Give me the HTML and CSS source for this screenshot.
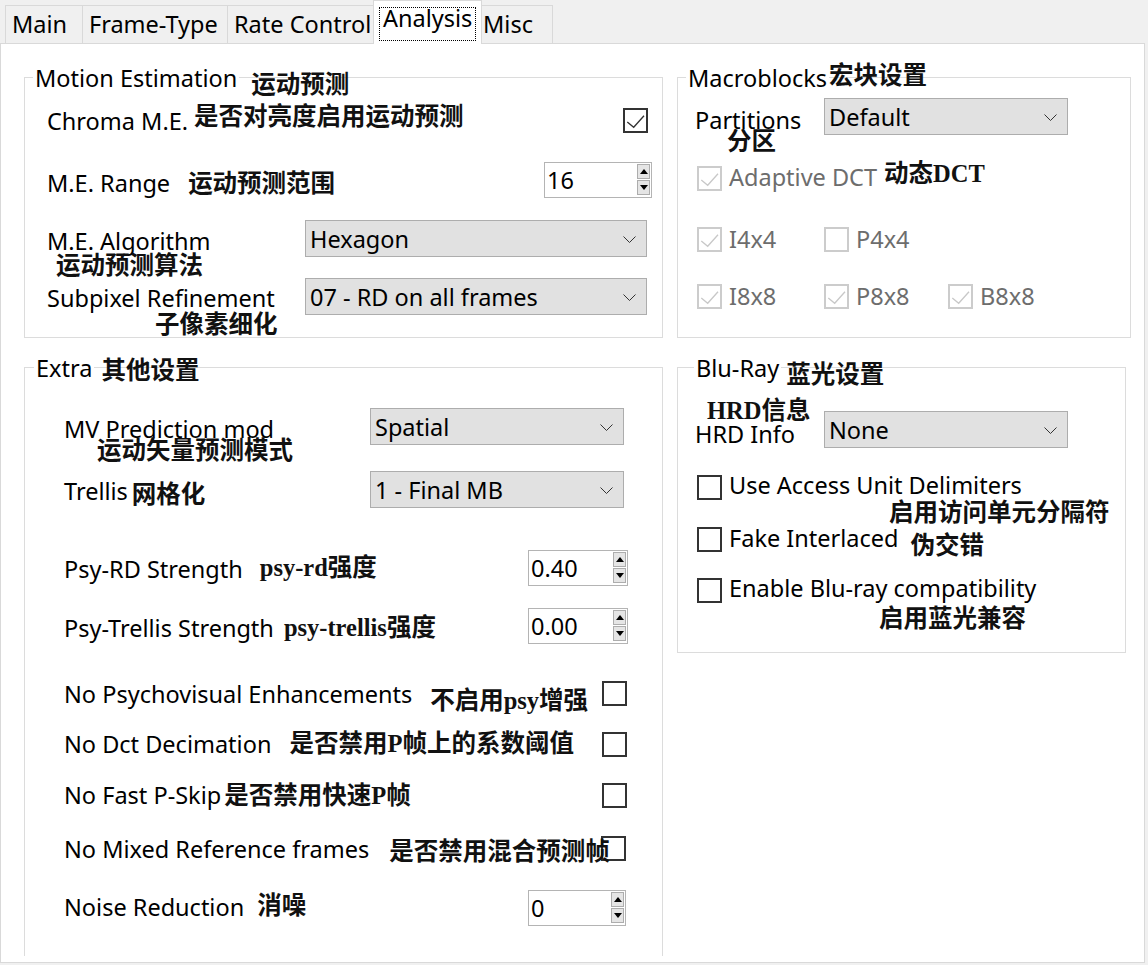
FILE: index.html
```html
<!DOCTYPE html>
<html>
<head>
<meta charset="utf-8">
<title>Analysis</title>
<link rel="stylesheet" href="styles.css">
</head>
<body>
<div class="tabbar">
  <div class="tab t-main">Main</div>
  <div class="tab t-frame">Frame-Type</div>
  <div class="tab t-rate">Rate Control</div>
  <div class="tab tab-active"><span class="focus">Analysis</span></div>
  <div class="tab t-misc">Misc</div>
</div>
<div class="page">
  <div class="content">

    <section class="group g-me">
      <div class="ghead">
        <span class="legend">Motion Estimation</span>
        <span class="ann a-me">运动预测</span>
      </div>
      <div class="row r-chroma">
        <span class="lbl">Chroma M.E.</span>
        <span class="ann a-chroma">是否对亮度启用运动预测</span>
        <span class="cb cb-right"><svg width="21" height="21" viewBox="0 0 21 21"><polyline points="2.3,12 8.7,17.3 19,5.7"/></svg></span>
      </div>
      <div class="row r-range">
        <span class="lbl l-range">M.E. Range</span>
        <span class="ann a-range">运动预测范围</span>
        <div class="spin w-range"><span>16</span><div class="arrows"><span class="sb"><svg width="8" height="5" viewBox="0 0 8 5"><polygon points="0,5 4,0 8,5"/></svg></span><span class="sb"><svg width="8" height="5" viewBox="0 0 8 5"><polygon points="0,0 8,0 4,5"/></svg></span></div></div>
      </div>
      <div class="row r-alg">
        <div class="stack s-alg"><span class="lbl">M.E. Algorithm</span><span class="ann a-alg">运动预测算法</span></div>
        <div class="combo w-me"><span>Hexagon</span><svg class="chev" width="13" height="8" viewBox="0 0 13 8"><polyline points="0.5,0.5 6.5,6.5 12.5,0.5"/></svg></div>
      </div>
      <div class="row r-sub">
        <div class="stack s-sub"><span class="lbl">Subpixel Refinement</span><span class="ann a-sub">子像素细化</span></div>
        <div class="combo w-me"><span>07 - RD on all frames</span><svg class="chev" width="13" height="8" viewBox="0 0 13 8"><polyline points="0.5,0.5 6.5,6.5 12.5,0.5"/></svg></div>
      </div>
    </section>

    <section class="group g-mb">
      <div class="ghead">
        <span class="legend">Macroblocks</span>
        <span class="ann a-mb">宏块设置</span>
      </div>
      <div class="row r-part">
        <div class="stack s-part"><span class="lbl">Partitions</span><span class="ann a-part">分区</span></div>
        <div class="combo w-part"><span>Default</span><svg class="chev" width="13" height="8" viewBox="0 0 13 8"><polyline points="0.5,0.5 6.5,6.5 12.5,0.5"/></svg></div>
      </div>
      <div class="row cbrow r-adct">
        <span class="cb dis"><svg width="21" height="21" viewBox="0 0 21 21"><polyline points="2.3,12 8.7,17.3 19,5.7"/></svg></span>
        <span class="lt dis-t l-adct">Adaptive DCT</span>
        <span class="ann a-adct">动态DCT</span>
      </div>
      <div class="row cbrow r-i4">
        <div class="cbi"><span class="cb dis"><svg width="21" height="21" viewBox="0 0 21 21"><polyline points="2.3,12 8.7,17.3 19,5.7"/></svg></span><span class="lt dis-t">I4x4</span></div>
        <div class="cbi cbi2"><span class="cb dis"></span><span class="lt dis-t">P4x4</span></div>
      </div>
      <div class="row cbrow r-i8">
        <div class="cbi"><span class="cb dis"><svg width="21" height="21" viewBox="0 0 21 21"><polyline points="2.3,12 8.7,17.3 19,5.7"/></svg></span><span class="lt dis-t">I8x8</span></div>
        <div class="cbi cbi2"><span class="cb dis"><svg width="21" height="21" viewBox="0 0 21 21"><polyline points="2.3,12 8.7,17.3 19,5.7"/></svg></span><span class="lt dis-t">P8x8</span></div>
        <div class="cbi cbi3"><span class="cb dis"><svg width="21" height="21" viewBox="0 0 21 21"><polyline points="2.3,12 8.7,17.3 19,5.7"/></svg></span><span class="lt dis-t">B8x8</span></div>
      </div>
    </section>

    <section class="group g-ex">
      <div class="ghead">
        <span class="legend">Extra</span>
        <span class="ann a-ex">其他设置</span>
      </div>
      <div class="row r-mv">
        <div class="stack s-mv"><span class="lbl">MV Prediction mod</span><span class="ann a-mv">运动矢量预测模式</span></div>
        <div class="combo w-ex"><span>Spatial</span><svg class="chev" width="13" height="8" viewBox="0 0 13 8"><polyline points="0.5,0.5 6.5,6.5 12.5,0.5"/></svg></div>
      </div>
      <div class="row r-trel">
        <span class="lbl l-trel">Trellis</span>
        <span class="ann a-trel">网格化</span>
        <div class="combo w-ex"><span>1 - Final MB</span><svg class="chev" width="13" height="8" viewBox="0 0 13 8"><polyline points="0.5,0.5 6.5,6.5 12.5,0.5"/></svg></div>
      </div>
      <div class="row r-prd">
        <span class="lbl l-prd">Psy-RD Strength</span>
        <span class="ann a-prd">psy-rd强度</span>
        <div class="spin w-ps"><span>0.40</span><div class="arrows"><span class="sb"><svg width="8" height="5" viewBox="0 0 8 5"><polygon points="0,5 4,0 8,5"/></svg></span><span class="sb"><svg width="8" height="5" viewBox="0 0 8 5"><polygon points="0,0 8,0 4,5"/></svg></span></div></div>
      </div>
      <div class="row r-ptr">
        <span class="lbl l-ptr">Psy-Trellis Strength</span>
        <span class="ann a-ptr">psy-trellis强度</span>
        <div class="spin w-ps"><span>0.00</span><div class="arrows"><span class="sb"><svg width="8" height="5" viewBox="0 0 8 5"><polygon points="0,5 4,0 8,5"/></svg></span><span class="sb"><svg width="8" height="5" viewBox="0 0 8 5"><polygon points="0,0 8,0 4,5"/></svg></span></div></div>
      </div>
      <div class="row r-npsy">
        <span class="lbl">No Psychovisual Enhancements</span>
        <span class="ann a-npsy">不启用psy增强</span>
        <span class="cb ex-cb"></span>
      </div>
      <div class="row r-ndct">
        <span class="lbl l-b2">No Dct Decimation</span>
        <span class="ann a-ndct">是否禁用P帧上的系数阈值</span>
        <span class="cb ex-cb"></span>
      </div>
      <div class="row r-nfast">
        <span class="lbl l-b2">No Fast P-Skip</span>
        <span class="ann a-nfast">是否禁用快速P帧</span>
        <span class="cb ex-cb"></span>
      </div>
      <div class="row r-nmix">
        <span class="lbl">No Mixed Reference frames</span>
        <span class="ann a-nmix">是否禁用混合预测帧</span>
        <span class="cb ex-cb cb-mix"></span>
      </div>
      <div class="row r-noise">
        <span class="lbl l-b2">Noise Reduction</span>
        <span class="ann a-noise">消噪</span>
        <div class="spin w-noise"><span>0</span><div class="arrows"><span class="sb"><svg width="8" height="5" viewBox="0 0 8 5"><polygon points="0,5 4,0 8,5"/></svg></span><span class="sb"><svg width="8" height="5" viewBox="0 0 8 5"><polygon points="0,0 8,0 4,5"/></svg></span></div></div>
      </div>
    </section>

    <section class="group g-bd">
      <div class="ghead">
        <span class="legend">Blu-Ray</span>
        <span class="ann a-bd">蓝光设置</span>
      </div>
      <div class="row r-hrd">
        <div class="stack s-hrd"><span class="ann a-hrd">HRD信息</span><span class="lbl l-hrd">HRD Info</span></div>
        <div class="combo w-hrd"><span>None</span><svg class="chev" width="13" height="8" viewBox="0 0 13 8"><polyline points="0.5,0.5 6.5,6.5 12.5,0.5"/></svg></div>
      </div>
      <div class="row cbrow r-aud">
        <span class="cb"></span>
        <div class="stack s-aud"><span class="lbl">Use Access Unit Delimiters</span><span class="ann a-aud">启用访问单元分隔符</span></div>
      </div>
      <div class="row cbrow r-fake">
        <span class="cb"></span>
        <span class="lt l-fake">Fake Interlaced</span>
        <span class="ann a-fake">伪交错</span>
      </div>
      <div class="row cbrow r-blu">
        <span class="cb"></span>
        <div class="stack s-blu"><span class="lbl">Enable Blu-ray compatibility</span><span class="ann a-blu">启用蓝光兼容</span></div>
      </div>
    </section>

  </div>
</div>
</body>
</html>
```

FILE: styles.css
```css
* { box-sizing: border-box; }
html, body { margin: 0; }
body {
  width: 1148px;
  height: 965px;
  overflow: hidden;
  background: #f0f0f0;
  color: #000;
  font-family: "Noto Sans", "Open Sans", sans-serif;
  font-size: 23.5px;
  line-height: 24px;
}

/* ---------- tabs ---------- */
.tabbar {
  height: 43px;
  display: flex;
  align-items: flex-end;
  padding-left: 5px;
}
.tab {
  flex: none;
  height: 38px;
  border: 1px solid #d9d9d9;
  border-bottom: 0;
  border-right: 0;
  background: #f0f0f0;
  padding-left: 6px;
  line-height: 37px;
  white-space: nowrap;
}
.t-main { width: 77px; }
.t-frame { width: 145px; }
.t-rate { width: 146px; }
.tab-active {
  width: 109px;
  height: 44px;
  margin-bottom: -1px;
  border-right: 1px solid #d9d9d9;
  background: #fff;
  position: relative;
  z-index: 1;
  padding: 6px 0 0 5px;
  display: flex;
  align-items: flex-start;
}
.focus {
  border: 1px dotted #000;
  padding: 0 3px 12px 3px;
  line-height: 20px;
}
.t-misc {
  width: 71px;
  border-left: 0;
  border-right: 1px solid #d9d9d9;
  padding-left: 1px;
}

/* ---------- page ---------- */
.page {
  width: 1145px;
  height: 920px;
  border: 1px solid #d9d9d9;
  background: #fff;
}
.content {
  height: 912px;
  overflow: hidden;
  padding: 33px 0 0 23px;
  display: grid;
  grid-template-columns: 639px 454px;
  grid-template-rows: 261px 640px;
  column-gap: 14px;
  row-gap: 29px;
  align-items: start;
  justify-items: start;
}

/* ---------- group boxes ---------- */
.group {
  border: 1px solid #dcdcdc;
  display: flex;
  flex-direction: column;
}
.g-me { width: 639px; height: 261px; }
.g-mb { width: 454px; height: 261px; }
.g-ex { width: 639px; height: 640px; }
.g-bd { width: 449px; height: 286px; }

.ghead {
  flex: none;
  display: flex;
  align-items: center;
  height: 26px;
  margin-top: -13px;
}
.legend {
  background: #fff;
  padding: 0 2px;
  white-space: nowrap;
}
.row {
  flex: none;
  display: flex;
  align-items: center;
}
.row > *, .ghead > * { flex: none; }
.lbl, .lt { white-space: nowrap; }

.ann {
  font-family: "Liberation Serif", "Noto Sans CJK SC", serif;
  font-weight: 700;
  font-size: 24.5px;
  line-height: 26px;
  white-space: nowrap;
  color: #111;
  position: relative;
  z-index: 1;
}
.row > .ann { margin-right: -80px; }

.stack {
  display: flex;
  flex-direction: column;
  align-items: flex-start;
  align-self: flex-start;
}

/* ---------- controls ---------- */
.combo {
  height: 37px;
  border: 1px solid #adadad;
  background: #e1e1e1;
  display: flex;
  align-items: center;
  padding-left: 4px;
  margin-left: auto;
  white-space: nowrap;
}
.chev {
  flex: none;
  margin-left: auto;
  margin-right: 10px;
  margin-top: 3px;
}
.chev polyline { fill: none; stroke: #333; stroke-width: 1; }

.spin {
  height: 36px;
  border: 1px solid #b4b4b4;
  background: #fff;
  display: flex;
  align-items: center;
  padding-left: 2px;
  margin-left: auto;
}
.arrows {
  margin-left: auto;
  margin-right: 1px;
  align-self: stretch;
  display: flex;
  flex-direction: column;
  gap: 1px;
  padding: 1px 0 2px;
}
.sb {
  flex: 1;
  width: 13px;
  background: #e5e5e5;
  border: 1px solid #adadad;
  display: flex;
  align-items: center;
  justify-content: center;
}
.sb polygon { fill: #000; }

.cb {
  width: 25px;
  height: 25px;
  border: 2px solid #333;
  background: #fff;
  display: flex;
  align-items: center;
  justify-content: center;
}
.cb svg polyline { fill: none; stroke: #333; stroke-width: 1.3; }
.cb.dis { border-color: #cccccc; }
.cb.dis svg polyline { stroke: #c8c8c8; }
.dis-t { color: #6d6d6d; }
.lt { margin-left: 7px; margin-bottom: 2px; }
.cbrow { height: 25px; padding-left: 19px; }
.cbi { display: flex; align-items: center; width: 127px; }
.cbi2 { width: 124px; }
.cbi3 { width: auto; }

/* ---------- Motion Estimation ---------- */
.g-me .legend { margin-left: 8px; }
.a-me { margin-left: 12px; margin-top: 13px; }
.g-me .row { padding-left: 22px; }
.r-chroma { height: 37px; margin-top: 11px; }
.a-chroma { margin-left: 6px; margin-bottom: 7px; }
.cb-right { margin-left: auto; margin-right: 14px; }
.r-range { height: 37px; margin-top: 22px; }
.l-range { margin-top: 6px; }
.a-range { margin-left: 18px; margin-top: 8px; }
.w-range { width: 108px; margin-right: 10px; }
.r-alg { height: 37px; margin-top: 22px; }
.s-alg { padding-top: 9px; }
.a-alg { margin-left: 9px; }
.w-me { width: 342px; margin-right: 15px; }
.r-sub { height: 37px; margin-top: 21px; }
.s-sub { padding-top: 8px; }
.a-sub { margin-left: 108px; margin-top: 2px; }

/* ---------- Macroblocks ---------- */
.g-mb .legend { margin-left: 8px; }
.a-mb { margin-left: 0; margin-bottom: 4px; }
.r-part { height: 37px; margin-top: 7px; padding-left: 17px; }
.s-part { padding-top: 10px; }
.a-part { margin-left: 32px; margin-top: -3px; }
.w-part { width: 244px; margin-right: 62px; }
.r-adct { margin-top: 31px; }
.l-adct { margin-bottom: 4px; }
.a-adct { margin-left: 7px; margin-bottom: 10px; }
.r-i4 { margin-top: 36px; }
.r-i8 { margin-top: 32px; }

/* ---------- Extra ---------- */
.g-ex .legend { margin-left: 9px; }
.a-ex { margin-left: 7px; margin-top: 5px; }
.g-ex .row { padding-left: 39px; }
.r-mv { height: 37px; margin-top: 27px; }
.s-mv { padding-top: 9px; }
.a-mv { margin-left: 33px; margin-top: -3px; }
.w-ex { width: 254px; margin-right: 38px; }
.r-trel { height: 37px; margin-top: 26px; }
.l-trel { margin-top: 3px; }
.a-trel { margin-left: 4px; margin-top: 11px; }
.r-prd { height: 36px; margin-top: 42px; }
.l-prd { margin-top: 2px; }
.a-prd { margin-left: 17px; }
.w-ps { width: 100px; margin-right: 34px; }
.r-ptr { height: 36px; margin-top: 22px; }
.l-ptr { margin-top: 3px; }
.a-ptr { margin-left: 10px; margin-top: 3px; }
.r-npsy { height: 25px; margin-top: 37px; }
.a-npsy { margin-left: 18px; margin-top: 15px; }
.ex-cb { margin-left: auto; margin-right: 35px; }
.r-ndct { height: 25px; margin-top: 26px; }
.l-b2 { margin-bottom: 2px; }
.a-ndct { margin-left: 18px; margin-bottom: 2px; }
.r-nfast { height: 25px; margin-top: 26px; }
.a-nfast { margin-left: 3px; }
.r-nmix { height: 25px; margin-top: 28px; }
.a-nmix { margin-left: 20px; margin-top: 7px; }
.cb-mix { margin-right: 36px; }
.r-noise { height: 36px; margin-top: 29px; }
.a-noise { margin-left: 13px; margin-bottom: 4px; }
.w-noise { width: 98px; margin-right: 36px; }

/* ---------- Blu-Ray ---------- */
.g-bd .legend { margin-left: 16px; }
.a-bd { margin-left: 5px; margin-top: 14px; }
.r-hrd { height: 37px; margin-top: 30px; padding-left: 17px; }
.s-hrd { margin-top: -13px; }
.a-hrd { margin-left: 12px; }
.l-hrd { margin-top: -2px; }
.w-hrd { width: 244px; margin-right: 57px; }
.r-aud { margin-top: 27px; }
.s-aud { margin-left: 7px; margin-top: -2px; }
.a-aud { margin-left: 160px; margin-top: 3px; }
.r-fake { margin-top: 27px; }
.l-fake { margin-bottom: 4px; }
.a-fake { margin-left: 12px; margin-top: 12px; }
.r-blu { margin-top: 26px; }
.s-blu { margin-left: 7px; margin-top: -2px; }
.a-blu { margin-left: 150px; margin-top: 6px; }
```
